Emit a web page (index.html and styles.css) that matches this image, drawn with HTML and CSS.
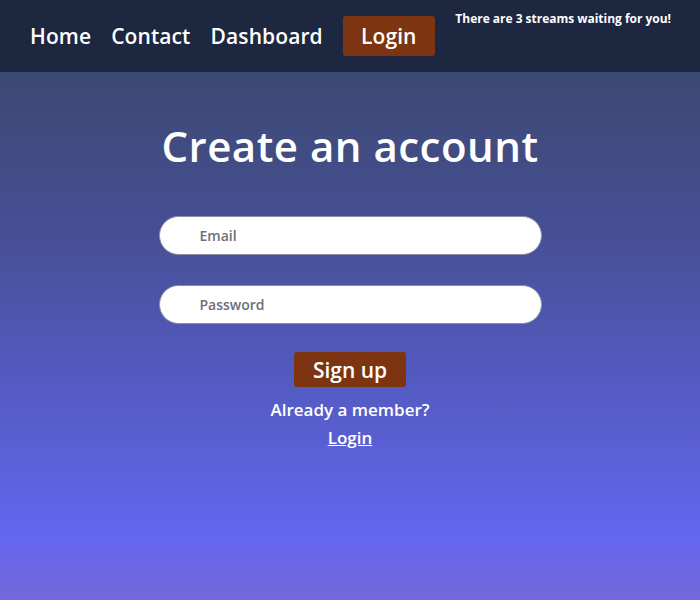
FILE: index.html
```html
<!DOCTYPE html>
<html>
<head>
<meta charset="utf-8">
<link rel="stylesheet" href="styles.css">
</head>
<body>
<nav class="nav">
  <div class="links">
    <a class="link" href="#">Home</a>
    <a class="link" href="#">Contact</a>
    <a class="link" href="#">Dashboard</a>
    <a class="login-btn" href="#">Login</a>
  </div>
  <div class="notice">There are 3 streams waiting for you!</div>
</nav>
<main class="main">
  <h1 class="title">Create an account</h1>
  <form class="form">
    <input class="field" type="email" placeholder="Email">
    <input class="field" type="password" placeholder="Password">
    <button class="signup" type="button">Sign up</button>
  </form>
  <p class="member">Already a member?</p>
  <a class="member-link" href="#">Login</a>
</main>
</body>
</html>
```
FILE: styles.css
```css
* { box-sizing: border-box; }
html, body { margin: 0; height: 100%; }
body {
  font-family: "Open Sans", "Noto Sans", sans-serif;
  color: #fff;
  display: flex;
  flex-direction: column;
  background: #1e2740;
}
.nav {
  height: 72px;
  background: #1e2740;
  display: flex;
  justify-content: space-between;
  padding: 0 29px 0 30px;
}
.links {
  display: flex;
  align-items: center;
  gap: 20px;
  height: 72px;
}
.link, .login-btn {
  color: #fff;
  text-decoration: none;
  font-size: 21px;
  font-weight: 600;
  letter-spacing: 0.1px;
}
.login-btn {
  background: #7c3510;
  border-radius: 3px;
  width: 92px;
  height: 40px;
  display: flex;
  align-items: center;
  justify-content: center;
}
.notice {
  font-size: 12px;
  font-weight: 700;
  letter-spacing: -0.02px;
  padding-top: 10px;
}
.main {
  flex: 1;
  display: flex;
  flex-direction: column;
  align-items: center;
  background: linear-gradient(180deg, #3c4972 0%, #464f94 30%, #5a60d6 72%, #6366f0 88%, #7568d8 100%);
}
.title {
  margin: 48px 0 0;
  font-size: 42px;
  font-weight: 600;
  line-height: 52px;
  letter-spacing: 0.5px;
}
.form {
  display: flex;
  flex-direction: column;
  align-items: center;
  margin-top: 44px;
}
.field {
  width: 383px;
  height: 39px;
  border-radius: 20px;
  border: 1px solid #8a8fa8;
  background: #fff;
  padding: 0 0 0 40px;
  font-family: inherit;
  font-size: 14px;
  font-weight: 600;
  margin-bottom: 30px;
  outline: none;
}
.field:nth-child(2) { margin-bottom: 28px; }
.field::placeholder { color: #6b6f7a; }
.signup {
  width: 112px;
  height: 35px;
  background: #7c3510;
  border: none;
  border-radius: 3px;
  color: #fff;
  font-family: inherit;
  font-size: 21px;
  font-weight: 600;
}
.member {
  margin: 12px 0 0;
  font-size: 17px;
  font-weight: 600;
  line-height: 22px;
}
.member-link {
  margin-top: 6px;
  color: #fff;
  font-size: 17px;
  font-weight: 600;
  line-height: 22px;
}
```
